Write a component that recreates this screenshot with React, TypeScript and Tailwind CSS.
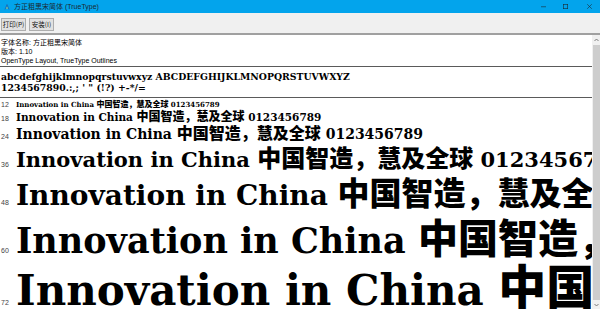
const rows = [
  { label: '12', h: 'h-[10px]', lat: 'text-[7px]', cjk: 'text-[8px]' },
  { label: '18', h: 'h-[14px]', lat: 'text-[10.5px]', cjk: 'text-[12px]' },
  { label: '24', h: 'h-[19px]', lat: 'text-[14px]', cjk: 'text-[16px]' },
  { label: '36', h: 'h-[29px]', lat: 'text-[21px]', cjk: 'text-[24px]' },
  { label: '48', h: 'h-[40px]', lat: 'text-[28px]', cjk: 'text-[32px]' },
  { label: '60', h: 'h-[48px]', lat: 'text-[35px]', cjk: 'text-[40px]' },
  { label: '72', h: 'h-[54px]', lat: 'text-[42px]', cjk: 'text-[48px]' },
];

function TitleBar() {
  return (
    <div className="h-[13px] bg-[#03a4ec] flex items-center text-[#1c2a33] shrink-0">
      <svg className="ml-[4px] w-[6px] h-[6px]" viewBox="0 0 12 12">
        <path d="M2 11 L6 1 L10 11" fill="none" stroke="#1d6fb8" strokeWidth="2" />
        <path d="M4 8 H8" stroke="#f4c542" strokeWidth="1.5" />
      </svg>
      <span className="ml-[4px] text-[7px] leading-none font-['Liberation_Sans','Noto_Sans_CJK_SC',sans-serif]">
        方正粗黑宋简体 (TrueType)
      </span>
      <div className="ml-auto flex items-center h-full">
        <svg className="w-[5px] h-[5px] mr-[17px]" viewBox="0 0 10 10">
          <path d="M0 5.5 H10" stroke="#1c2a33" strokeWidth="1.2" />
        </svg>
        <svg className="w-[5px] h-[5px] mr-[19px]" viewBox="0 0 10 10">
          <rect x="0.6" y="0.6" width="8.8" height="8.8" fill="none" stroke="#1c2a33" strokeWidth="1.2" />
        </svg>
        <svg className="w-[5px] h-[5px] mr-[8px]" viewBox="0 0 10 10">
          <path d="M0.5 0.5 L9.5 9.5 M9.5 0.5 L0.5 9.5" stroke="#1c2a33" strokeWidth="1.2" />
        </svg>
      </div>
    </div>
  );
}

function Toolbar() {
  return (
    <div className="h-[22px] bg-[#f0f0f0] border-b-2 border-[#a0a0a0] flex items-center pl-[1px] gap-[3px] shrink-0 font-['Noto_Sans_CJK_SC',sans-serif]">
      <button className="h-[13px] w-[25px] mt-[2px] bg-[#e1e1e1] border border-[#adadad] text-[6.5px] leading-none text-[#111] flex items-center justify-center">
        打印(P)
      </button>
      <button className="h-[13px] w-[25px] mt-[2px] bg-[#e1e1e1] border border-[#adadad] text-[6.5px] leading-none text-[#111] flex items-center justify-center">
        安装(I)
      </button>
    </div>
  );
}

function Scrollbar() {
  return (
    <div className="w-[8px] flex flex-col bg-[#f0f0f0] shrink-0">
      <div className="h-[10px] flex items-center justify-center">
        <svg className="w-[5px] h-[4px]" viewBox="0 0 10 8">
          <path d="M1 6 L5 2 L9 6" fill="none" stroke="#606060" strokeWidth="1.6" />
        </svg>
      </div>
      <div className="flex-1 bg-[#cdcdcd] ml-[1px]" />
      <div className="h-[9px] flex items-center justify-center">
        <svg className="w-[5px] h-[4px]" viewBox="0 0 10 8">
          <path d="M1 2 L5 6 L9 2" fill="none" stroke="#606060" strokeWidth="1.6" />
        </svg>
      </div>
    </div>
  );
}

export default function App() {
  return (
    <div className="w-[600px] h-[309px] flex flex-col bg-white overflow-hidden">
      <TitleBar />
      <Toolbar />
      <div className="flex flex-1 min-h-0">
        <div className="flex-1 min-w-0 overflow-hidden flex flex-col">
          <div className="h-[31px] pt-[3px] pl-[1px] text-[7px] leading-[9px] text-black font-['Liberation_Sans','Noto_Sans_CJK_SC',sans-serif] shrink-0">
            <div>字体名称: 方正粗黑宋简体</div>
            <div>版本: 1.10</div>
            <div>OpenType Layout, TrueType Outlines</div>
          </div>
          <div className="h-px bg-[#5a5a5a] shrink-0" />
          <div className="h-[30px] pt-[4px] pl-[1px] text-[9.3px] leading-[11px] font-bold text-black font-['DejaVu_Serif',serif] whitespace-nowrap shrink-0">
            <div>abcdefghijklmnopqrstuvwxyz ABCDEFGHIJKLMNOPQRSTUVWXYZ</div>
            <div>1234567890.:,; ' " (!?) +-*/=</div>
          </div>
          <div className="h-px bg-[#5a5a5a] shrink-0" />
          {rows.map((r) => (
            <div key={r.label} className={`flex items-end shrink-0 ${r.h}`}>
              <div className={`whitespace-nowrap leading-none font-bold text-black font-['DejaVu_Serif',serif] ${r.lat}`}>
                <span className="inline-block w-[16px] pl-[1px] text-[7px] font-normal text-[#444] font-['Liberation_Sans',sans-serif]">
                  {r.label}
                </span>
                <span>Innovation in China </span>
                <span className={`font-black font-['Noto_Sans_CJK_SC',sans-serif] ${r.cjk}`}>中国智造，慧及全球</span>
                <span> 0123456789</span>
              </div>
            </div>
          ))}
        </div>
        <Scrollbar />
      </div>
    </div>
  );
}
